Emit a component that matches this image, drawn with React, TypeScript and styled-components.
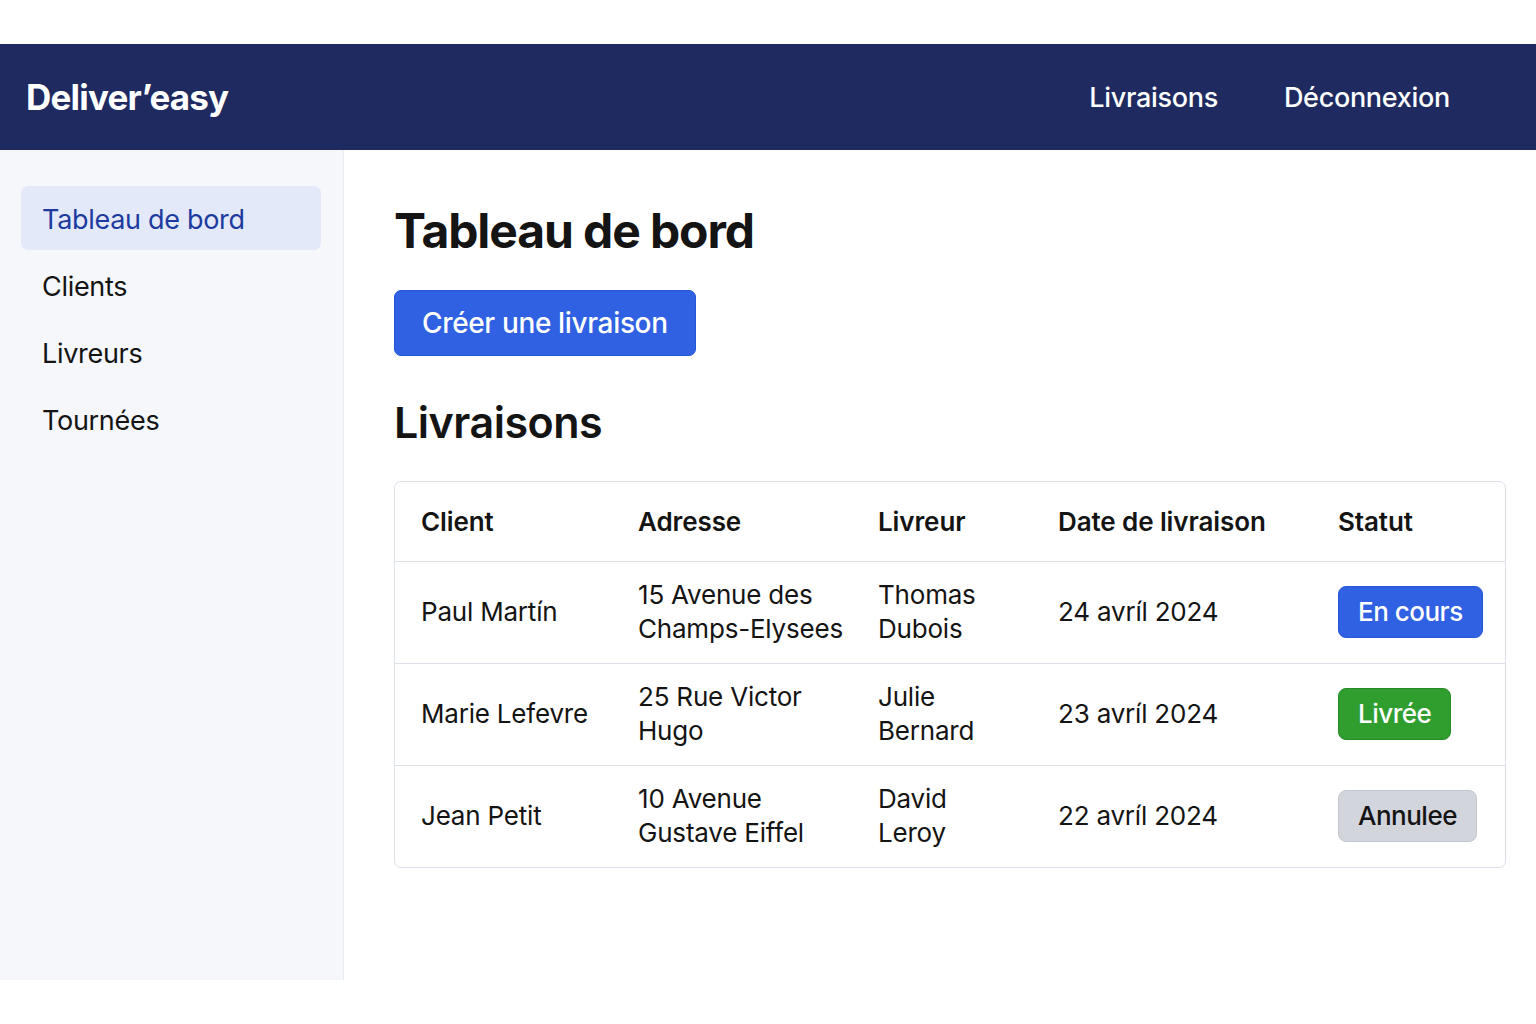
import React from "react";
import styled, { createGlobalStyle } from "styled-components";

const Global = createGlobalStyle`
  html, body { margin: 0; padding: 0; background: #ffffff; }
  body { font-family: Inter, "Noto Sans", "Liberation Sans", sans-serif; color: #141414; }
  * { box-sizing: border-box; }
`;

const Page = styled.div`
  padding-top: 44px;
  width: 1536px;
`;

const Header = styled.header`
  height: 106px;
  background: #1e2a60;
  display: flex;
  align-items: center;
  justify-content: space-between;
  padding: 0 86px 0 26px;
`;

const Logo = styled.div`
  color: #ffffff;
  font-size: 35px;
  font-weight: 700;
  letter-spacing: -0.8px;
`;

const TopNav = styled.nav`
  display: flex;
  gap: 66px;
`;

const TopLink = styled.a`
  color: #ffffff;
  font-size: 27px;
  font-weight: 500;
  text-decoration: none;
  letter-spacing: -0.3px;
`;

const Layout = styled.div`
  display: flex;
  height: 830px;
`;

const Sidebar = styled.aside`
  width: 344px;
  flex-shrink: 0;
  background: #f5f7fa;
  border-right: 1px solid #e8ebf0;
  padding: 36px 22px 0 21px;
  display: flex;
  flex-direction: column;
  gap: 3px;
`;

const SideItem = styled.a<{ $active?: boolean }>`
  display: flex;
  align-items: center;
  height: 64px;
  padding: 2px 0 0 21px;
  border-radius: 7px;
  font-size: 27px;
  text-decoration: none;
  letter-spacing: -0.3px;
  color: ${(p) => (p.$active ? "#1d3b9e" : "#141414")};
  background: ${(p) => (p.$active ? "#e3e9f9" : "transparent")};
`;

const Main = styled.main`
  flex: 1;
  padding: 52px 30px 0 50px;
  display: flex;
  flex-direction: column;
  align-items: flex-start;
`;

const Title = styled.h1`
  margin: 0;
  font-size: 48px;
  font-weight: 700;
  line-height: 1.2;
  letter-spacing: -1.1px;
  color: #141414;
`;

const PrimaryButton = styled.button`
  margin-top: 30px;
  height: 66px;
  padding: 0 27px;
  background: #2f61e2;
  border: 1px solid #2456d8;
  border-radius: 7px;
  color: #ffffff;
  font-family: inherit;
  font-size: 28px;
  font-weight: 500;
  letter-spacing: -0.35px;
`;

const SectionTitle = styled.h2`
  margin: 41px 0 0;
  font-size: 43px;
  font-weight: 600;
  line-height: 1.2;
  letter-spacing: -0.5px;
  color: #141414;
`;

const TableCard = styled.div`
  margin-top: 33px;
  width: 1112px;
  border: 1px solid #dde2ea;
  border-radius: 7px;
  overflow: hidden;
`;

const Table = styled.table`
  width: 100%;
  border-collapse: collapse;
  table-layout: fixed;
`;

const Th = styled.th`
  text-align: left;
  font-size: 26px;
  font-weight: 600;
  height: 79px;
  padding: 0 20px 0 26px;
  border-bottom: 1px solid #dde2ea;
  color: #141414;
  letter-spacing: -0.1px;
`;

const Tr = styled.tr`
  & + & td { border-top: 1px solid #dde2ea; }
`;

const Td = styled.td`
  font-size: 26px;
  line-height: 34px;
  height: 102px;
  padding: 0 0 0 26px;
  vertical-align: middle;
  color: #141414;
  letter-spacing: -0.2px;
`;

const Line = styled.span`
  display: block;
  white-space: nowrap;
`;

const variants = {
  progress: { bg: "#2f61e2", border: "#2456d8", color: "#ffffff" },
  done: { bg: "#2f9e2f", border: "#268a26", color: "#ffffff" },
  cancelled: { bg: "#d2d5db", border: "#c3c7ce", color: "#141414" },
};

type Variant = keyof typeof variants;

const Badge = styled.span<{ $v: Variant }>`
  display: inline-flex;
  align-items: center;
  height: 52px;
  padding: 0 19px;
  border-radius: 8px;
  font-size: 26px;
  font-weight: 500;
  letter-spacing: -0.5px;
  background: ${(p) => variants[p.$v].bg};
  border: 1px solid ${(p) => variants[p.$v].border};
  color: ${(p) => variants[p.$v].color};
`;

const rows: { client: string; address: string[]; driver: string[]; date: string; status: string; v: Variant }[] = [
  { client: "Paul Martín", address: ["15 Avenue des", "Champs-Elysees"], driver: ["Thomas", "Dubois"], date: "24 avríl 2024", status: "En cours", v: "progress" },
  { client: "Marie Lefevre", address: ["25 Rue Victor", "Hugo"], driver: ["Julie", "Bernard"], date: "23 avríl 2024", status: "Livrée", v: "done" },
  { client: "Jean Petit", address: ["10 Avenue", "Gustave Eiffel"], driver: ["David", "Leroy"], date: "22 avríl 2024", status: "Annulee", v: "cancelled" },
];

export default function App() {
  return (
    <Page>
      <Global />
      <Header>
        <Logo>Deliver’easy</Logo>
        <TopNav>
          <TopLink href="#">Livraisons</TopLink>
          <TopLink href="#">Déconnexion</TopLink>
        </TopNav>
      </Header>
      <Layout>
        <Sidebar>
          <SideItem href="#" $active>Tableau de bord</SideItem>
          <SideItem href="#">Clients</SideItem>
          <SideItem href="#">Livreurs</SideItem>
          <SideItem href="#">Tournées</SideItem>
        </Sidebar>
        <Main>
          <Title>Tableau de bord</Title>
          <PrimaryButton>Créer une livraison</PrimaryButton>
          <SectionTitle>Livraisons</SectionTitle>
          <TableCard>
            <Table>
              <colgroup>
                <col style={{ width: 217 }} />
                <col style={{ width: 240 }} />
                <col style={{ width: 180 }} />
                <col style={{ width: 280 }} />
                <col />
              </colgroup>
              <thead>
                <tr>
                  <Th>Client</Th>
                  <Th>Adresse</Th>
                  <Th>Livreur</Th>
                  <Th>Date de livraison</Th>
                  <Th>Statut</Th>
                </tr>
              </thead>
              <tbody>
                {rows.map((r) => (
                  <Tr key={r.client}>
                    <Td>{r.client}</Td>
                    <Td>{r.address.map((l) => <Line key={l}>{l}</Line>)}</Td>
                    <Td>{r.driver.map((l) => <Line key={l}>{l}</Line>)}</Td>
                    <Td>{r.date}</Td>
                    <Td><Badge $v={r.v}>{r.status}</Badge></Td>
                  </Tr>
                ))}
              </tbody>
            </Table>
          </TableCard>
        </Main>
      </Layout>
    </Page>
  );
}
